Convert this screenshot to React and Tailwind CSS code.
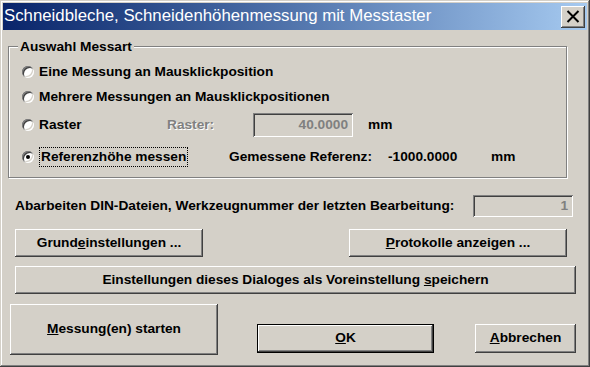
import React from 'react';

const raised =
  'shadow-[inset_-1px_-1px_#404040,inset_1px_1px_#ffffff,inset_-2px_-2px_#808080,inset_2px_2px_#d4d0c8]';
const sunken =
  'shadow-[inset_1px_1px_#808080,inset_-1px_-1px_#ffffff,inset_2px_2px_#404040,inset_-2px_-2px_#d4d0c8]';

const Radio = ({ checked }) => (
  <span
    className={`w-[12px] h-[12px] rounded-full bg-white flex items-center justify-center shrink-0 ${sunken}`}
  >
    {checked && <span className="w-[4px] h-[4px] rounded-full bg-black" />}
  </span>
);

const Button = ({ className = '', children, isDefault }) => (
  <div
    className={`flex items-center justify-center bg-[#d4d0c8] ${
      isDefault ? 'border border-black' : ''
    } ${raised} ${className}`}
  >
    {children}
  </div>
);

const Field = ({ value, className = '' }) => (
  <div
    className={`flex items-center justify-end pr-[5px] bg-[#d4d0c8] text-[#808080] ${sunken} ${className}`}
  >
    {value}
  </div>
);

const App = () => {
  return (
    <div className="w-[590px] h-[367px] bg-[#d4d0c8] p-[3px] flex flex-col shadow-[inset_-1px_-1px_#404040,inset_1px_1px_#d4d0c8,inset_-2px_-2px_#808080,inset_2px_2px_#ffffff] font-['Liberation_Sans',Arial,sans-serif] text-black font-bold text-[13.7px] overflow-hidden">
      {/* Title bar */}
      <div className="h-[27px] flex items-center bg-linear-to-r from-[#0a246a] to-[#a6caf0] shrink-0">
        <span className="ml-[1px] text-white font-normal text-[16.8px] leading-none">
          Schneidbleche, Schneidenhöhenmessung mit Messtaster
        </span>
        <div className={`ml-auto mr-[2px] w-[24px] h-[22px] bg-[#d4d0c8] flex items-center justify-center ${raised}`}>
          <svg width="14" height="13" viewBox="0 0 14 13">
            <path d="M1.5 1 L12.5 12 M12.5 1 L1.5 12" stroke="#000" strokeWidth="2" />
          </svg>
        </div>
      </div>

      {/* Auswahl Messart */}
      <div className="mt-[16px] ml-[5px] w-[559px] h-[132px] border border-[#808080] shadow-[inset_1px_1px_#ffffff,1px_1px_#ffffff] flex flex-col shrink-0">
        <div className="-mt-[9px] ml-[9px] px-[2px] w-fit h-[17px] leading-[17px] bg-[#d4d0c8]">
          Auswahl Messart
        </div>

        <div className="mt-[7px] ml-[13px] h-[20px] flex items-center">
          <Radio />
          <span className="ml-[5px]">Eine Messung an Mausklickposition</span>
        </div>

        <div className="mt-[5px] ml-[13px] h-[20px] flex items-center">
          <Radio />
          <span className="ml-[5px]">Mehrere Messungen an Mausklickpositionen</span>
        </div>

        <div className="mt-[6px] ml-[13px] h-[24px] flex items-center">
          <div className="w-[145px] flex items-center">
            <Radio />
            <span className="ml-[5px]">Raster</span>
          </div>
          <span className="w-[86px] text-[#808080] [text-shadow:1px_1px_#ffffff]">Raster:</span>
          <Field value="40.0000" className="w-[100px] h-[24px]" />
          <span className="ml-[15px]">mm</span>
        </div>

        <div className="mt-[10px] ml-[13px] h-[20px] flex items-center">
          <div className="w-[207px] flex items-center">
            <Radio checked />
            <span className="ml-[5px] px-[1px] h-[20px] leading-[18px] border border-dotted border-black">
              Referenzhöhe messen
            </span>
          </div>
          <span className="w-[159px]">Gemessene Referenz:</span>
          <span className="w-[103px]">-1000.0000</span>
          <span>mm</span>
        </div>
      </div>

      {/* DIN-Dateien */}
      <div className="mt-[17px] ml-[12px] mr-[14px] h-[22px] flex items-center shrink-0">
        <span>Abarbeiten DIN-Dateien, Werkzeugnummer der letzten Bearbeitung:</span>
        <Field value="1" className="ml-auto w-[100px] h-[22px]" />
      </div>

      {/* Buttons */}
      <div className="mt-[12px] ml-[12px] flex shrink-0">
        <Button className="w-[188px] h-[28px]">
          <span>
            Grund<u>e</u>instellungen ...
          </span>
        </Button>
        <Button className="ml-[146px] w-[218px] h-[28px]">
          <span>
            <u>P</u>rotokolle anzeigen ...
          </span>
        </Button>
      </div>

      <div className="mt-[9px] ml-[12px] flex shrink-0">
        <Button className="w-[561px] h-[28px]">
          <span>
            Einstellungen dieses Dialoges als Voreinstellung <u>s</u>peichern
          </span>
        </Button>
      </div>

      <div className="mt-[10px] ml-[7px] flex items-start shrink-0">
        <Button className="w-[208px] h-[51px]">
          <span>
            <u>M</u>essung(en) starten
          </span>
        </Button>
        <Button isDefault className="mt-[20px] ml-[39px] w-[177px] h-[29px]">
          <span>
            <u>O</u>K
          </span>
        </Button>
        <Button className="mt-[20px] ml-[41px] w-[101px] h-[29px]">
          <span>
            <u>A</u>bbrechen
          </span>
        </Button>
      </div>
    </div>
  );
};

export default App;
